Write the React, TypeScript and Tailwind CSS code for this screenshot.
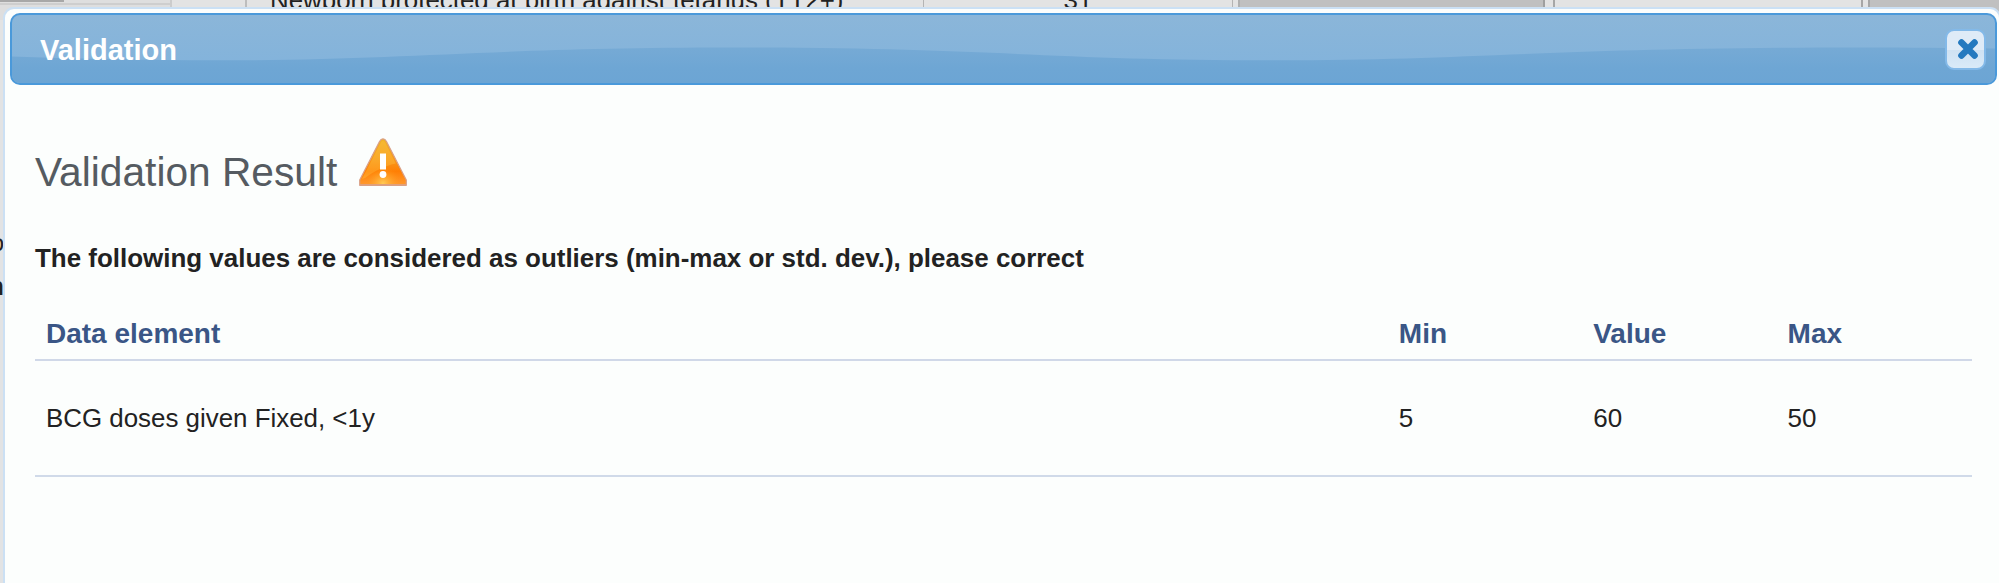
const columns = ["Min", "Value", "Max"];
const rows = [{ name: "BCG doses given Fixed, <1y", values: ["5", "60", "50"] }];

function WarningIcon() {
  return (
    <svg className="h-[50px] w-[50px] shrink-0" viewBox="0 0 50 50" aria-hidden="true">
      <defs>
        <linearGradient id="body" x1="0" y1="0" x2="0" y2="1">
          <stop offset="0" stopColor="#f0b428" />
          <stop offset="0.45" stopColor="#f8981a" />
          <stop offset="0.7" stopColor="#ff7f04" />
          <stop offset="1" stopColor="#ff9a30" />
        </linearGradient>
        <radialGradient id="glow" cx="0.5" cy="0.98" r="0.4">
          <stop offset="0" stopColor="#ffd860" stopOpacity="0.8" />
          <stop offset="1" stopColor="#ff9a10" stopOpacity="0" />
        </radialGradient>
      </defs>
      <path d="M25 1.800c1.700 0 2.700 1.200 3.500 2.700L48.300 43v5.300H1.700V43L21.500 4.500C22.300 3 23.300 1.800 25 1.800z" fill="url(#body)" stroke="#d9a088" strokeWidth="1.2" strokeLinejoin="round" />
      <path d="M25 4c1.200 0 1.700.8 2.400 2l10.400 20.500C29 28 16 34 7 41l-3 1L22.600 6c.7-1.200 1.200-2 2.400-2z" fill="#ffc648" opacity="0.35" />
      <path d="M3 43.500 25 5l22 38.500V47H3z" fill="url(#glow)" />
      <path d="M2 47.700h46" stroke="#e0a07a" strokeWidth="1.300" />
      <path d="M22 16.500h6v16h-6z" fill="#fff" />
      <circle cx="25" cy="37.500" r="3.400" fill="#fff" />
    </svg>
  );
}

function CloseButton() {
  return (
    <button
      type="button"
      aria-label="Close"
      className="relative flex h-[41px] w-[41px] items-center justify-center rounded-[9px] border-2 border-[#83b9e8] bg-linear-to-b from-[#dfebf7] from-50% via-[#cfe2f3] via-52% to-[#d9eaf8]"
    >
      <svg className="ml-[5px] h-[22px] w-[22px]" viewBox="0 0 22 22" aria-hidden="true">
        <path d="M4.500 4.500l13 13M17.500 4.500l-13 13" stroke="#2479bf" strokeWidth="6.600" strokeLinecap="round" />
      </svg>
    </button>
  );
}

function BackgroundForm() {
  return (
    <div className="h-[583px] w-full overflow-hidden bg-[#e2e3e4]">
      <div className="flex h-[20px] bg-[#e3e3e3]">
        <div className="h-full w-[172px] shrink-0 border-r-2 border-[#cccccc] bg-[#dedede]">
          <div className="h-[2px] w-[64px] bg-[#a8a8a8]" />
          <div className="mt-px h-[2px] w-full bg-[#cecece]" />
        </div>
        <div className="w-[75px] shrink-0 border-r-2 border-[#bdbdbd]" />
        <div className="w-[677px] shrink-0 border-r border-[#b4b4b4] pl-[23px]">
          <div className="mt-[-15px] h-[30px] whitespace-nowrap text-[25.900px] leading-[30px]">
            Newborn protected at birth against tetanus (TT2+)
          </div>
        </div>
        <div className="w-[309px] shrink-0 border-r border-[#b4b4b4]">
          <div className="mt-[-15px] h-[30px] text-center text-[25.900px] leading-[30px]">31</div>
        </div>
        <div className="ml-[5px] w-[307px] shrink-0 border-x-2 border-l-[#b0b0b0] border-r-[#9f9f9f] bg-[#c0c0c0]" />
        <div className="ml-[8px] w-[310px] shrink-0 border-x-2 border-[#a6a6a6]" />
        <div className="ml-[5px] flex-1 border-l-2 border-[#a6a6a6] bg-[#c0c0c0]" />
      </div>
      <div className="mt-[208px] flex w-[4px] justify-end overflow-hidden text-[24px] leading-[30px]">o</div>
      <div className="mt-[13px] flex w-[4px] justify-end overflow-hidden text-[26px] leading-[30px] font-bold">n</div>
    </div>
  );
}

function TitleBar() {
  return (
    <div className="relative flex h-[72px] shrink-0 items-center justify-between overflow-hidden rounded-[10px] border-2 border-[#4a99da] bg-linear-to-b from-[#8bb6d9] to-[#80b2dc] pr-[9px] pl-[28px]">
      <svg className="absolute inset-0 h-full w-full" viewBox="0 0 1984 69" preserveAspectRatio="none" aria-hidden="true">
        <defs>
          <linearGradient id="wave" x1="0" y1="0" x2="0" y2="1">
            <stop offset="0" stopColor="#76aad5" />
            <stop offset="0.6" stopColor="#6ea6d4" />
            <stop offset="1" stopColor="#6ca5d4" />
          </linearGradient>
        </defs>
        <path
          d="M0 42C60 44 130 46 209 46C390 46 480 33 720 33C980 33 1040 46 1265 46C1460 46 1540 33 1850 33C1900 33 1940 33.500 1984 34V69H0Z"
          fill="url(#wave)"
        />
      </svg>
      <h1 className="relative pt-[2px] text-[29px] leading-[34px] font-bold text-white">Validation</h1>
      <CloseButton />
    </div>
  );
}

export default function App() {
  return (
    <main className="relative h-[583px] w-full overflow-hidden font-['Liberation_Sans',Arial,sans-serif] text-[#222222]">
      <BackgroundForm />
      <section className="absolute top-[7px] right-[-2px] left-[3px] flex h-[600px] flex-col rounded-t-[11px] border-2 border-[#cbe0f4] bg-[#fcfefd] pt-[4px] pr-[2px] pl-[5px]">
        <TitleBar />
        <div className="pr-[25px] pl-[25px]">
          <div className="mt-[51px] flex h-[54px]">
            <h2 className="mt-[13px] text-[40.700px] leading-[46px] whitespace-nowrap text-[#555b61]">Validation Result</h2>
            <div className="mt-px ml-[21px]">
              <WarningIcon />
            </div>
          </div>
          <p className="mt-[53px] text-[25.950px] leading-[30px] font-bold whitespace-nowrap">
            The following values are considered as outliers (min-max or std. dev.), please correct
          </p>
          <table className="mt-[36px] w-full table-fixed border-collapse text-left">
            <colgroup>
              <col />
              <col className="w-[194.400px]" />
              <col className="w-[194.400px]" />
              <col className="w-[194.400px]" />
            </colgroup>
            <thead>
              <tr className="h-[51px] border-b-2 border-[#d0d8e8] text-[28px] leading-[32px] text-[#3a5686]">
                <th className="px-[11px] align-middle font-bold">Data element</th>
                {columns.map((c) => (
                  <th key={c} className="px-[10px] align-middle font-bold">{c}</th>
                ))}
              </tr>
            </thead>
            <tbody>
              {rows.map((r) => (
                <tr key={r.name} className="h-[116px] border-b-2 border-[#d0dae9] text-[26px] leading-[30px]">
                  <td className="px-[11px] text-[25.900px]">{r.name}</td>
                  {r.values.map((v, i) => (
                    <td key={i} className="px-[10px]">{v}</td>
                  ))}
                </tr>
              ))}
            </tbody>
          </table>
        </div>
      </section>
    </main>
  );
}
